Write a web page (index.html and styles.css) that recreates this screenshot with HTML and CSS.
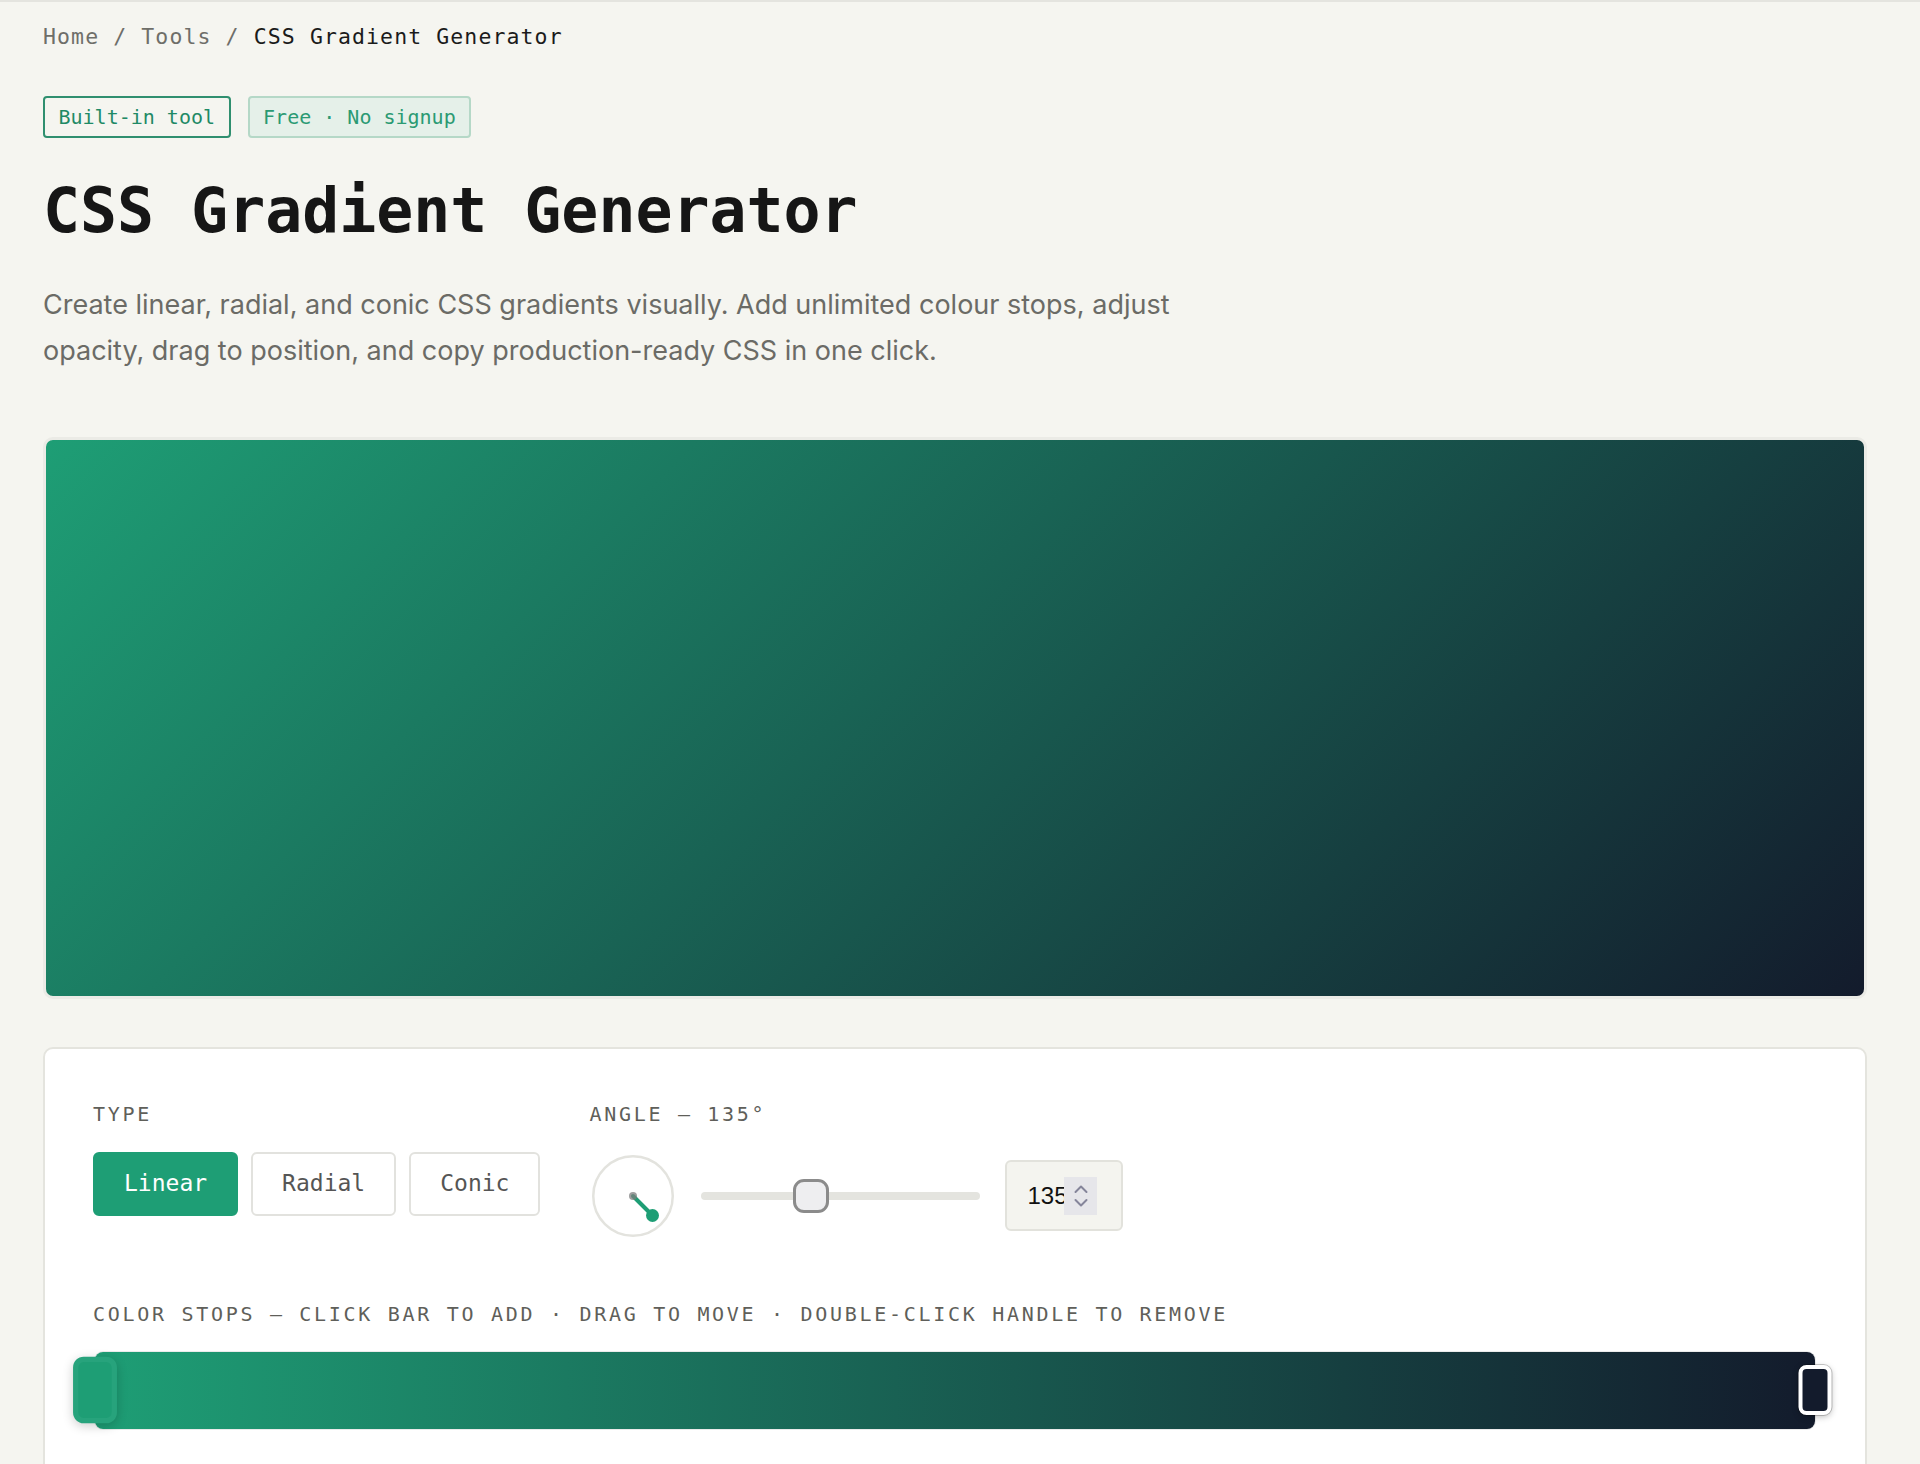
FILE: index.html
```html
<!DOCTYPE html>
<html lang="en">
<head>
    <meta charset="UTF-8">
    <meta name="viewport" content="width=device-width, initial-scale=1.0">
    <title>CSS Gradient Generator</title>
    <link rel="stylesheet" href="styles.css">
</head>
<body>
    <div class="page">
        <nav class="breadcrumb">
            <span>Home</span> / <span>Tools</span> / <span class="current">CSS Gradient Generator</span>
        </nav>

        <div class="badges">
            <span class="badge">Built-in tool</span>
            <span class="badge badge-soft">Free · No signup</span>
        </div>

        <h1>CSS Gradient Generator</h1>
        <p class="intro">Create linear, radial, and conic CSS gradients visually. Add unlimited colour stops, adjust opacity, drag to position, and copy production-ready CSS in one click.</p>

        <div class="preview"></div>

        <div class="panel">
            <div class="controls">
                <div class="group">
                    <div class="label">TYPE</div>
                    <div class="type-buttons">
                        <button class="type-btn active">Linear</button>
                        <button class="type-btn">Radial</button>
                        <button class="type-btn">Conic</button>
                    </div>
                </div>

                <div class="group">
                    <div class="label">ANGLE — 135°</div>
                    <div class="angle-row">
                        <svg class="dial" width="82" height="82" viewBox="0 0 82 82">
                            <circle cx="41" cy="41" r="39.75" fill="#fff" stroke="#e3e3de" stroke-width="2.5"/>
                            <line x1="41" y1="41" x2="60.5" y2="60.5" stroke="#1e9e75" stroke-width="4" stroke-linecap="round"/>
                            <circle cx="41" cy="41" r="4" fill="#7d7d7d" opacity="0.75"/>
                            <circle cx="60.5" cy="60.5" r="6.5" fill="#1e9e75"/>
                        </svg>
                        <input class="angle-slider" type="range" min="0" max="360" value="135">
                        <div class="num">
                            <span class="num-value">135</span>
                            <span class="spinner">
                                <svg width="16" height="30" viewBox="0 0 16 30">
                                    <path d="M2.5 11 L8 5.5 L13.5 11" fill="none" stroke="#85859a" stroke-width="2" stroke-linecap="round" stroke-linejoin="round"/>
                                    <path d="M2.5 19 L8 24.5 L13.5 19" fill="none" stroke="#85859a" stroke-width="2" stroke-linecap="round" stroke-linejoin="round"/>
                                </svg>
                            </span>
                        </div>
                    </div>
                </div>
            </div>

            <div class="label stops-label">COLOR STOPS — CLICK BAR TO ADD · DRAG TO MOVE · DOUBLE-CLICK HANDLE TO REMOVE</div>
            <div class="stop-bar">
                <span class="stop selected" style="left: 0%; background: #1e9e75;"></span>
                <span class="stop" style="left: 100%; background: #131b2c;"></span>
            </div>
        </div>
    </div>
</body>
</html>
```

FILE: styles.css
```css
* {
    box-sizing: border-box;
}

body {
    margin: 0;
    background: #f5f5f0;
    border-top: 2px solid #e4e4df;
    font-family: Inter, "Noto Sans", sans-serif;
}

.page {
    padding: 0 53px 60px 43px;
}

.breadcrumb {
    margin-top: 19.5px;
    font: 21.5px/30px "DejaVu Sans Mono", monospace;
    letter-spacing: 1.1px;
    color: #6e6e69;
}

.breadcrumb .current {
    color: #1b1b1b;
}

.badges {
    display: flex;
    gap: 17px;
    margin-top: 44px;
}

.badge {
    font: 20px/24.6px "DejaVu Sans Mono", monospace;
    padding: 7px 13.5px;
    border: 2px solid #2f8f6f;
    border-radius: 4px;
    color: #1f8a66;
}

.badge-soft {
    background: #e5f0e9;
    border-color: #b5d8c7;
    color: #2b9a73;
}

h1 {
    margin: 36.7px 0 0;
    font: 700 61.5px/73.8px "DejaVu Sans Mono", monospace;
    color: #161616;
}

.intro {
    margin: 33.7px 0 0;
    max-width: 1200px;
    font-size: 27px;
    line-height: 45.5px;
    color: #6b6b66;
}

.preview {
    margin-top: 63.5px;
    height: 562px;
    border: 3px solid #ebebe6;
    border-radius: 10px;
    background: linear-gradient(135deg, #1e9e75, #131b2c);
}

.panel {
    margin-top: 48.5px;
    background: #fff;
    border: 2px solid #e4e4de;
    border-radius: 10px;
    padding: 52.5px 48px 48px;
}

.controls {
    display: flex;
    gap: 49px;
}

.label {
    font: 20px/24px "DejaVu Sans Mono", monospace;
    letter-spacing: 2.7px;
    color: #5f5f5a;
}

.type-buttons {
    display: flex;
    gap: 13px;
    margin-top: 26px;
}

.type-btn {
    font: 23px/27px "DejaVu Sans Mono", monospace;
    padding: 16.5px 29px;
    border: 2px solid #e2e2de;
    border-radius: 6px;
    background: #fff;
    color: #555;
    cursor: pointer;
}

.type-btn.active {
    background: #1e9e75;
    border-color: #1e9e75;
    color: #fff;
}

.angle-row {
    display: flex;
    align-items: center;
    gap: 27px;
    height: 84px;
    margin-top: 28px;
}

.dial {
    display: block;
    margin-left: 3px;
}

.angle-slider {
    -webkit-appearance: none;
    appearance: none;
    width: 279px;
    height: 36px;
    margin: 0;
    background: transparent;
}

.angle-slider::-webkit-slider-runnable-track {
    height: 7.5px;
    background: #e4e4df;
    border-radius: 4px;
}

.angle-slider::-webkit-slider-thumb {
    -webkit-appearance: none;
    width: 36px;
    height: 34px;
    margin-top: -13.25px;
    border: 3px solid #8b8b8b;
    border-radius: 11px;
    background: #eeeef0;
}

.num {
    display: flex;
    align-items: center;
    width: 118px;
    height: 71px;
    margin-left: -2px;
    padding: 0 22px 0 20px;
    background: #f4f4ef;
    border: 2px solid #e2e2dc;
    border-radius: 6px;
}

.num-value {
    width: 37px;
    overflow: hidden;
    white-space: nowrap;
    font: 24px "Liberation Sans", Arial, sans-serif;
    color: #111;
}

.spinner {
    display: flex;
    align-items: center;
    justify-content: center;
    width: 33px;
    height: 38px;
    background: #e6e6ea;
}

.stops-label {
    margin-top: 64px;
}

.stop-bar {
    position: relative;
    height: 77px;
    margin: 26px 2px 0;
    border-radius: 8px;
    background: linear-gradient(90deg, #1e9e75, #131b2c);
    box-shadow: 0 0 0 1px rgba(0, 0, 0, 0.08);
}

.stop {
    position: absolute;
    top: 50%;
    width: 33px;
    height: 50px;
    border: 4px solid #fff;
    border-radius: 8px;
    transform: translate(-50%, -50%);
    box-shadow: 0 0 0 1px rgba(0, 0, 0, 0.2), 0 2px 6px rgba(0, 0, 0, 0.25);
}

.stop.selected {
    border-color: #27a37c;
    transform: translate(-50%, -50%) scale(1.33);
    box-shadow: 0 2px 8px rgba(0, 0, 0, 0.2);
}
```
